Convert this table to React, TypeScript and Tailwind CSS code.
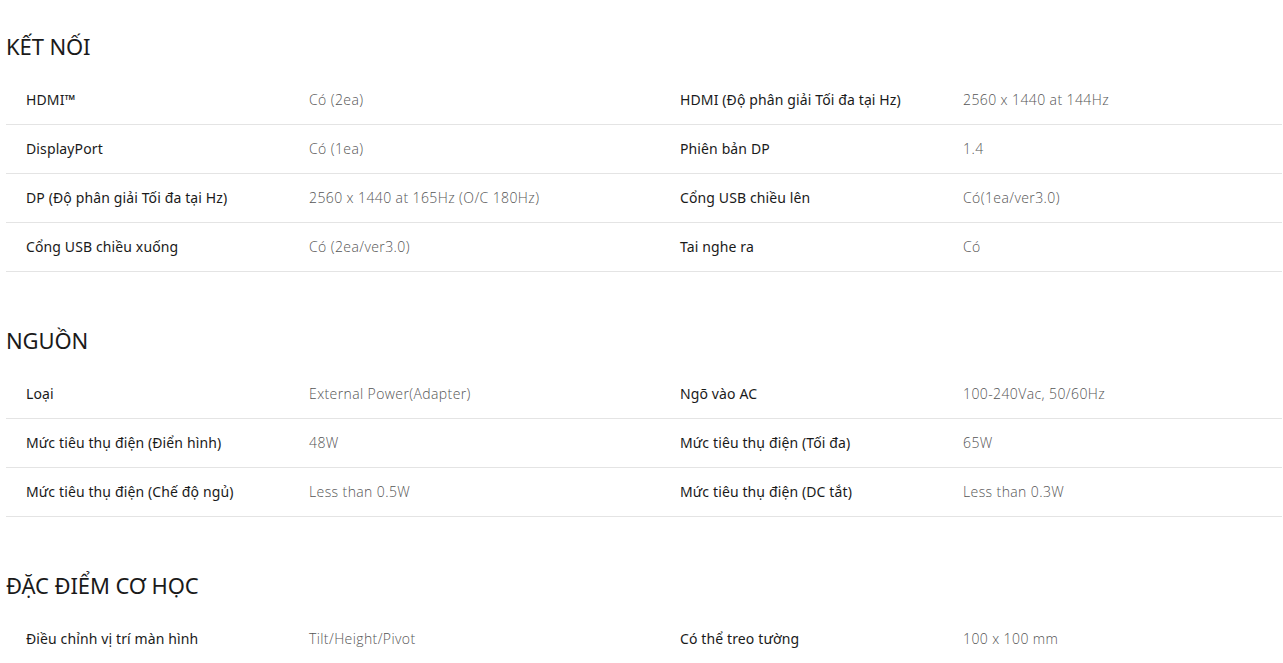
import React from "react";

type Row = [string, string, string, string];

const sections: { title: string; rows: Row[] }[] = [
  {
    title: "KẾT NỐI",
    rows: [
      ["HDMI™", "Có (2ea)", "HDMI (Độ phân giải Tối đa tại Hz)", "2560 x 1440 at 144Hz"],
      ["DisplayPort", "Có (1ea)", "Phiên bản DP", "1.4"],
      ["DP (Độ phân giải Tối đa tại Hz)", "2560 x 1440 at 165Hz (O/C 180Hz)", "Cổng USB chiều lên", "Có(1ea/ver3.0)"],
      ["Cổng USB chiều xuống", "Có (2ea/ver3.0)", "Tai nghe ra", "Có"],
    ],
  },
  {
    title: "NGUỒN",
    rows: [
      ["Loại", "External Power(Adapter)", "Ngõ vào AC", "100-240Vac, 50/60Hz"],
      ["Mức tiêu thụ điện (Điển hình)", "48W", "Mức tiêu thụ điện (Tối đa)", "65W"],
      ["Mức tiêu thụ điện (Chế độ ngủ)", "Less than 0.5W", "Mức tiêu thụ điện (DC tắt)", "Less than 0.3W"],
    ],
  },
  {
    title: "ĐẶC ĐIỂM CƠ HỌC",
    rows: [["Điều chỉnh vị trí màn hình", "Tilt/Height/Pivot", "Có thể treo tường", "100 x 100 mm"]],
  },
];

function Label({ children }: { children: React.ReactNode }) {
  return (
    <div className="pl-[20px] text-[14px] font-normal tracking-[0.12px] text-[#1a1a1a] font-['Noto_Sans','Open_Sans',sans-serif]">
      {children}
    </div>
  );
}

function Value({ children }: { children: React.ReactNode }) {
  return (
    <div className="pl-[20px] text-[14px] font-light tracking-[0.4px] text-[#555] font-['Open_Sans',sans-serif]">
      {children}
    </div>
  );
}

export default function App() {
  return (
    <div className="w-[1283px] h-[663px] overflow-hidden bg-white pl-[6px] pr-[1px] pt-[31px]">
      {sections.map((s, i) => (
        <section key={s.title} className={i > 0 ? "mt-[53px]" : ""}>
          <h2 className="text-[22px] leading-[30px] font-normal text-[#1a1a1a] tracking-[-0.1px] font-['Noto_Sans','Open_Sans',sans-serif]">
            {s.title}
          </h2>
          <div className="mt-[15px]">
            {s.rows.map((r, j) => (
              <div
                key={j}
                className="grid grid-cols-[283px_371px_283px_1fr] h-[49px] pb-[2px] items-center border-b border-[#e4e4e4]"
              >
                <Label>{r[0]}</Label>
                <Value>{r[1]}</Value>
                <Label>{r[2]}</Label>
                <Value>{r[3]}</Value>
              </div>
            ))}
          </div>
        </section>
      ))}
    </div>
  );
}
